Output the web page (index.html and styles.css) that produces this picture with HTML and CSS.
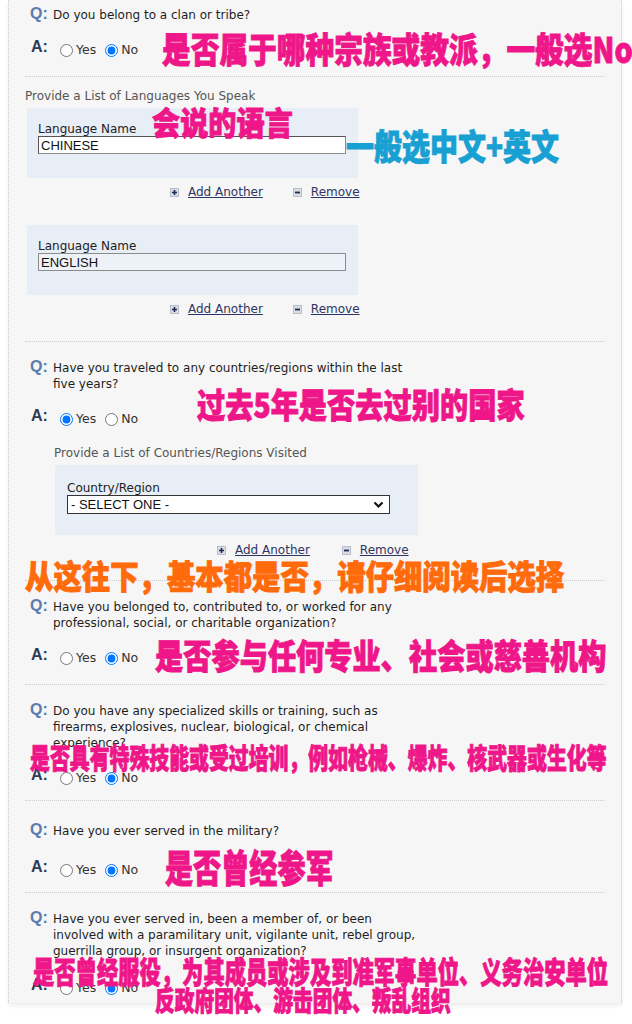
FILE: index.html
```html
<!DOCTYPE html>
<html lang="en">
<head>
<meta charset="utf-8">
<title>Additional Work/Education/Training Information</title>
<link rel="stylesheet" href="styles.css">
</head>
<body>
<div class="page">
  <div class="panel">
    <section class="item">
      <div class="q"><span class="ql">Q:</span><span class="qt">Do you belong to a clan or tribe?</span></div>
      <div class="a"><span class="al">A:</span>
        <label class="opt"><input type="radio" name="clan">Yes</label>
        <label class="opt opt-no"><input type="radio" name="clan" checked>No</label>
      </div>
    </section>
    <hr class="sep">
    <div class="list list-lang">
      <div class="list-title">Provide a List of Languages You Speak</div>
      <div class="entry">
        <label class="field-label">Language Name</label>
        <input class="text-in" type="text" value="CHINESE">
      </div>
      <div class="links">
        <span class="icon"><svg width="9" height="9" viewBox="0 0 9 9"><rect x="0.5" y="0.5" width="8" height="8" fill="#d9dde4" stroke="#b9bec8"/><path d="M4.5 2v5M2 4.5h5" stroke="#1f2a55" stroke-width="1.6"/></svg></span><a href="#" class="lnk">Add Another</a>
        <span class="icon icon-rm"><svg width="9" height="9" viewBox="0 0 9 9"><rect x="0.5" y="0.5" width="8" height="8" fill="#d9dde4" stroke="#b9bec8"/><path d="M2 4.5h5" stroke="#1f2a55" stroke-width="1.8"/></svg></span><a href="#" class="lnk">Remove</a>
      </div>
      <div class="entry entry-2">
        <label class="field-label">Language Name</label>
        <input class="text-in text-in-alt" type="text" value="ENGLISH">
      </div>
      <div class="links">
        <span class="icon"><svg width="9" height="9" viewBox="0 0 9 9"><rect x="0.5" y="0.5" width="8" height="8" fill="#d9dde4" stroke="#b9bec8"/><path d="M4.5 2v5M2 4.5h5" stroke="#1f2a55" stroke-width="1.6"/></svg></span><a href="#" class="lnk">Add Another</a>
        <span class="icon icon-rm"><svg width="9" height="9" viewBox="0 0 9 9"><rect x="0.5" y="0.5" width="8" height="8" fill="#d9dde4" stroke="#b9bec8"/><path d="M2 4.5h5" stroke="#1f2a55" stroke-width="1.8"/></svg></span><a href="#" class="lnk">Remove</a>
      </div>
    </div>
    <hr class="sep sep-lang">
    <section class="item">
      <div class="q"><span class="ql">Q:</span><span class="qt">Have you traveled to any countries/regions within the last<br>five years?</span></div>
      <div class="a"><span class="al">A:</span>
        <label class="opt"><input type="radio" name="travel" checked>Yes</label>
        <label class="opt opt-no"><input type="radio" name="travel">No</label>
      </div>
    </section>
    <div class="list list-country">
      <div class="list-title">Provide a List of Countries/Regions Visited</div>
      <div class="entry entry-country">
        <label class="field-label">Country/Region</label>
        <div class="select-wrap">
          <select class="sel"><option>- SELECT ONE -</option></select>
          <svg class="chev" width="11" height="8" viewBox="0 0 11 8"><path d="M1.5 1.5l4 4 4-4" fill="none" stroke="#111" stroke-width="2.2"/></svg>
        </div>
      </div>
      <div class="links links-country">
        <span class="icon"><svg width="9" height="9" viewBox="0 0 9 9"><rect x="0.5" y="0.5" width="8" height="8" fill="#d9dde4" stroke="#b9bec8"/><path d="M4.5 2v5M2 4.5h5" stroke="#1f2a55" stroke-width="1.6"/></svg></span><a href="#" class="lnk">Add Another</a>
        <span class="icon icon-rm"><svg width="9" height="9" viewBox="0 0 9 9"><rect x="0.5" y="0.5" width="8" height="8" fill="#d9dde4" stroke="#b9bec8"/><path d="M2 4.5h5" stroke="#1f2a55" stroke-width="1.8"/></svg></span><a href="#" class="lnk">Remove</a>
      </div>
    </div>
    <hr class="sep sep-country">
    <section class="item">
      <div class="q"><span class="ql">Q:</span><span class="qt">Have you belonged to, contributed to, or worked for any<br>professional, social, or charitable organization?</span></div>
      <div class="a"><span class="al">A:</span>
        <label class="opt"><input type="radio" name="org">Yes</label>
        <label class="opt opt-no"><input type="radio" name="org" checked>No</label>
      </div>
    </section>
    <hr class="sep">
    <section class="item">
      <div class="q"><span class="ql">Q:</span><span class="qt">Do you have any specialized skills or training, such as<br>firearms, explosives, nuclear, biological, or chemical<br>experience?</span></div>
      <div class="a"><span class="al">A:</span>
        <label class="opt"><input type="radio" name="skills">Yes</label>
        <label class="opt opt-no"><input type="radio" name="skills" checked>No</label>
      </div>
    </section>
    <hr class="sep sep-tight">
    <section class="item item-mil">
      <div class="q"><span class="ql">Q:</span><span class="qt">Have you ever served in the military?</span></div>
      <div class="a a-mil"><span class="al">A:</span>
        <label class="opt"><input type="radio" name="mil">Yes</label>
        <label class="opt opt-no"><input type="radio" name="mil" checked>No</label>
      </div>
    </section>
    <hr class="sep sep-tight">
    <section class="item item-last">
      <div class="q"><span class="ql">Q:</span><span class="qt">Have you ever served in, been a member of, or been<br>involved with a paramilitary unit, vigilante unit, rebel group,<br>guerrilla group, or insurgent organization?</span></div>
      <div class="a a-last"><span class="al">A:</span>
        <label class="opt"><input type="radio" name="para">Yes</label>
        <label class="opt opt-no"><input type="radio" name="para" checked>No</label>
      </div>
    </section>
  </div>

  <div class="note pink n1">是否属于哪种宗族或教派，一般选No</div>
  <div class="note pink n2">会说的语言</div>
  <div class="note blue n3">一般选中文+英文</div>
  <div class="note pink n4">过去5年是否去过别的国家</div>
  <div class="note orange n5">从这往下，基本都是否，请仔细阅读后选择</div>
  <div class="note pink n6">是否参与任何专业、社会或慈善机构</div>
  <div class="note pink n7">是否具有特殊技能或受过培训，例如枪械、爆炸、核武器或生化等</div>
  <div class="note pink n8">是否曾经参军</div>
  <div class="note pink n9">是否曾经服役，为其成员或涉及到准军事单位、义务治安单位</div>
  <div class="note pink n10">反政府团体、游击团体、叛乱组织</div>
</div>
</body>
</html>
```

FILE: styles.css
```css
html, body {
  margin: 0;
  padding: 0;
  background: #ffffff;
}

body {
  font-family: "DejaVu Sans", Verdana, sans-serif;
  font-size: 12px;
  color: #222;
}

.page {
  position: relative;
  width: 632px;
  height: 1024px;
  overflow: hidden;
}

.panel {
  margin-left: 8px;
  width: 612px;
  background: #f6f6f6;
  border-left: 1px dotted #c9c9c9;
  border-right: 1px dotted #c9c9c9;
  padding-bottom: 6px;
  box-shadow: 0 3px 4px rgba(0, 0, 0, 0.07);
}

.item {
  padding: 17px 0 0 21px;
}

.item:first-child {
  padding-top: 6px;
}

.q {
  display: flex;
  align-items: baseline;
  line-height: 16px;
}

.ql {
  flex: none;
  width: 23px;
  font: bold 16px "Liberation Sans", Arial, sans-serif;
  line-height: 16px;
  color: #5a7cae;
}

.qt {
  font-size: 12px;
  color: #1e1e1e;
  line-height: 16px;
}

.a {
  display: flex;
  align-items: flex-start;
  margin-top: 16px;
  height: 20px;
}

.al {
  flex: none;
  width: 29px;
  padding-left: 1px;
  font: bold 16px "Liberation Sans", Arial, sans-serif;
  line-height: 16px;
  color: #2e3a57;
}

.opt {
  display: flex;
  align-items: center;
  margin-top: 4px;
  font-size: 12.5px;
  line-height: 14px;
  color: #333;
}

.opt-no {
  margin-left: 9px;
}

.opt input {
  margin: 0 3px 0 0;
  width: 13px;
  height: 13px;
}

.sep {
  border: 0;
  border-top: 1px dotted #cdcdcd;
  height: 0;
  margin: 17px 16px 0 16px;
}

.sep-tight {
  margin-top: 13px;
}

.list {
  padding-left: 16px;
}

.list-title {
  margin-top: 11px;
  line-height: 16px;
  color: #555;
}

.entry {
  box-sizing: border-box;
  width: 331px;
  height: 70px;
  margin: 4px 0 0 2px;
  padding: 14px 11px 0;
  background: #e8eef5;
}

.entry-2 {
  margin-top: 25px;
}

.field-label {
  display: block;
  line-height: 14px;
  color: #222;
}

.text-in {
  display: block;
  box-sizing: border-box;
  width: 308px;
  height: 18px;
  margin: 0;
  padding: 0 2px;
  border: 1px solid #8a8a8a;
  border-top-color: #555;
  border-left-color: #555;
  background: #fff;
  font: 13px "Liberation Sans", Arial, sans-serif;
  color: #111;
}

.text-in-alt {
  background: #edf2f9;
  border-color: #8c8c8c;
}

.links {
  display: flex;
  align-items: center;
  margin: 6px 0 0 145px;
  line-height: 16px;
}

.icon {
  display: flex;
  width: 9px;
  height: 9px;
  margin-right: 9px;
}

.icon-rm {
  margin-left: 30px;
}

.lnk {
  color: #2e3563;
  text-decoration: underline;
}

.sep-lang {
  margin-top: 24px;
}

.list-country {
  padding-left: 45px;
}

.list-country .list-title {
  margin-top: 17px;
}

.entry-country {
  width: 363px;
  margin-left: 1px;
  padding: 16px 12px 0;
}

.select-wrap {
  position: relative;
  width: 323px;
}

.sel {
  display: block;
  box-sizing: border-box;
  width: 323px;
  height: 19px;
  margin: 0;
  padding: 0 3px;
  border: 1px solid #333;
  border-radius: 0;
  background: #fff;
  -webkit-appearance: none;
  appearance: none;
  font: 13px "Liberation Sans", Arial, sans-serif;
  color: #111;
}

.chev {
  position: absolute;
  right: 6px;
  top: 6px;
}

.links-country {
  margin-left: 163px;
  margin-top: 7px;
}

.links-country .icon-rm {
  margin-left: 32px;
}

.sep-country {
  margin-top: 22px;
}

.item-mil {
  padding-top: 21px;
}

.a-mil {
  margin-top: 20px;
}

.a-last {
  margin-top: 18px;
}

/* annotations over the screenshot */
.note {
  position: absolute;
  font-family: "Noto Sans CJK SC", "Noto Sans", sans-serif;
  font-weight: 900;
  line-height: 1;
  white-space: nowrap;
  transform-origin: 0 0;
  -webkit-text-stroke: 0.9px currentColor;
}

.pink { color: #ee1689; }
.blue { color: #18a0d3; }
.orange { color: #ff6a0a; }

.n1 { left: 162px; top: 30px; font-size: 35px; transform: scaleX(0.82); }
.n2 { left: 152px; top: 105px; font-size: 32px; transform: scaleX(0.88); }
.n3 { left: 346px; top: 127px; font-size: 35px; transform: scaleX(0.8); }
.n4 { left: 197px; top: 387px; font-size: 34px; transform: scaleX(0.83); }
.n5 { left: 25px; top: 559px; font-size: 33px; transform: scaleX(0.86); }
.n6 { left: 155px; top: 638px; font-size: 34px; transform: scaleX(0.83); }
.n7 { left: 30px; top: 743px; font-size: 28px; transform: scaleX(0.71); }
.n8 { left: 165px; top: 847px; font-size: 38px; transform: scaleX(0.74); }
.n9 { left: 33px; top: 955px; font-size: 30px; transform: scaleX(0.71); }
.n10 { left: 155px; top: 986px; font-size: 27px; transform: scaleX(0.73); }
```
